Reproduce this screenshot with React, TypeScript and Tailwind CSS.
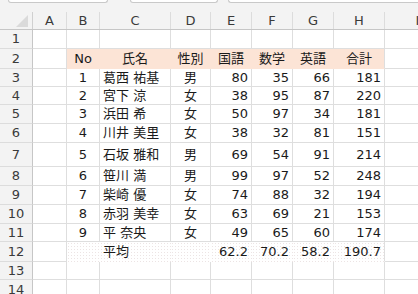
import React from 'react';

type Cell = { t?: string; a?: 'l' | 'c' | 'r' };

const colLetters = ['A', 'B', 'C', 'D', 'E', 'F', 'G', 'H', 'I'];
const colWidths = ['w-[34px]', 'w-[33px]', 'w-[71px]', 'w-[40px]', 'w-[41px]', 'w-[41px]', 'w-[41px]', 'w-[51px]', 'w-[66px]'];
const rowHeights = ['h-[19px]', 'h-[20px]', 'h-[18px]', 'h-[18px]', 'h-[19px]', 'h-[19px]', 'h-[24px]', 'h-[19px]', 'h-[19px]', 'h-[19px]', 'h-[18px]', 'h-[20px]', 'h-[18px]', 'h-[20px]'];

const students = [
  ['1', '葛西 祐基', '男', '80', '35', '66', '181'],
  ['2', '宮下 涼', '女', '38', '95', '87', '220'],
  ['3', '浜田 希', '女', '50', '97', '34', '181'],
  ['4', '川井 美里', '女', '38', '32', '81', '151'],
  ['5', '石坂 雅和', '男', '69', '54', '91', '214'],
  ['6', '笹川 満', '男', '99', '97', '52', '248'],
  ['7', '柴崎 優', '女', '74', '88', '32', '194'],
  ['8', '赤羽 美幸', '女', '63', '69', '21', '153'],
  ['9', '平 奈央', '女', '49', '65', '60', '174'],
];

const toRow = (r: string[]): Cell[] => [
  {},
  { t: r[0], a: 'c' },
  { t: r[1], a: 'l' },
  { t: r[2], a: 'c' },
  { t: r[3], a: 'r' },
  { t: r[4], a: 'r' },
  { t: r[5], a: 'r' },
  { t: r[6], a: 'r' },
  {},
];

const rows: Cell[][] = [
  [{}, {}, {}, {}, {}, {}, {}, {}, {}],
  [{}, { t: 'No', a: 'c' }, { t: '氏名', a: 'c' }, { t: '性別', a: 'c' }, { t: '国語', a: 'c' }, { t: '数学', a: 'c' }, { t: '英語', a: 'c' }, { t: '合計', a: 'c' }, {}],
  ...students.map(toRow),
  [{}, {}, { t: '平均', a: 'l' }, {}, { t: '62.2', a: 'r' }, { t: '70.2', a: 'r' }, { t: '58.2', a: 'r' }, { t: '190.7', a: 'r' }, {}],
  [{}, {}, {}, {}, {}, {}, {}, {}, {}],
  [{}, {}, {}, {}, {}, {}, {}, {}, {}],
];

const alignClass = { l: 'justify-start pl-[3px]', c: 'justify-center', r: 'justify-end pr-[3px]' };

export default function App() {
  return (
    <div className="w-[418px] h-[294px] overflow-hidden bg-white font-['DejaVu_Sans','Noto_Sans_CJK_JP',sans-serif] text-[13px] text-[#1a1a1a]">
      {/* toolbar edge */}
      <div className="flex h-[12px] bg-[#f3f3f3]">
        <div className="ml-[8px] w-[100px] h-[3px] bg-white border-x border-b border-[#c9c9c9] rounded-b-[5px]" />
        <div className="ml-[22px] w-[88px] h-[3px] bg-white border-x border-b border-[#c9c9c9] rounded-b-[5px]" />
        <div className="ml-[10px] flex-1 h-[3px] bg-white border-l border-b border-[#c9c9c9] rounded-bl-[5px]" />
      </div>

      {/* column headers */}
      <div className="flex h-[18px] bg-[#f3f3f3] border-b border-[#c6c6c6]">
        <div className="relative w-[33px] shrink-0 border-r border-[#d0d0d0]">
          <svg className="absolute left-[16px] top-[3px]" width="12" height="12" viewBox="0 0 12 12">
            <polygon points="12,0 12,12 0,12" fill="#dadada" />
          </svg>
        </div>
        {colLetters.map((c, i) => (
          <div key={c} className={`${colWidths[i]} shrink-0 flex items-center justify-center border-r border-[#dcdcdc] text-[#3a3a3a]`}>
            {c}
          </div>
        ))}
      </div>

      {/* rows */}
      {rows.map((row, ri) => {
        const fill = ri === 1 ? 'pink' : ri === 11 ? 'dots' : '';
        return (
          <div key={ri} className={`flex ${rowHeights[ri]}`}>
            <div className="w-[33px] shrink-0 flex items-center justify-center bg-[#f3f3f3] border-r border-b border-r-[#c6c6c6] border-b-[#dcdcdc] text-[#3a3a3a]">
              {ri + 1}
            </div>
            {row.map((cell, ci) => {
              const inFill = fill && ci >= 1 && ci <= 7;
              let bg = 'border-[#dedede]';
              if (inFill && fill === 'pink') bg = `bg-[#fce4d6] border-b-[#fce4d6] ${ci < 7 ? 'border-r-[#fce4d6]' : 'border-r-[#dedede]'}`;
              if (inFill && fill === 'dots')
                bg = `bg-[radial-gradient(#ece4e4_0.7px,transparent_1px)] bg-[length:3px_3px] border-b-transparent ${ci < 7 ? 'border-r-transparent' : 'border-r-[#dedede]'}`;
              return (
                <div
                  key={ci}
                  className={`${colWidths[ci]} shrink-0 flex items-center whitespace-nowrap border-r border-b ${bg} ${cell.a ? alignClass[cell.a] : ''}`}
                >
                  {cell.t}
                </div>
              );
            })}
          </div>
        );
      })}
    </div>
  );
}
